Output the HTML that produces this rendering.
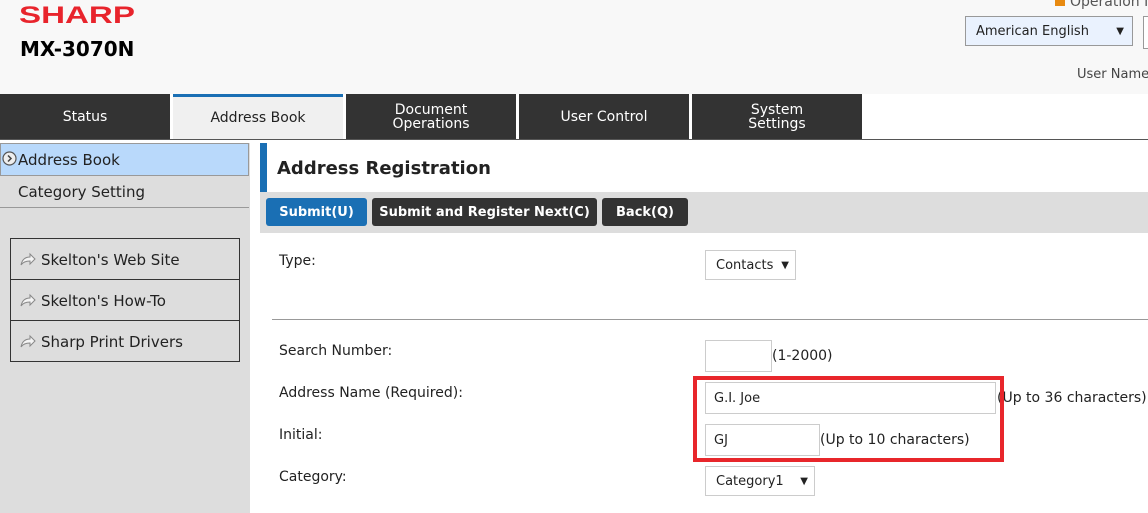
<!DOCTYPE html>
<html><head><meta charset="utf-8"><style>
*{margin:0;padding:0;box-sizing:border-box}
body{width:1148px;height:513px;overflow:hidden;background:#fff;font-family:"DejaVu Sans","Liberation Sans",sans-serif;font-size:14px;color:#222;position:relative}
.a{position:absolute;white-space:nowrap}
.tab{position:absolute;top:94px;height:45px;background:#333;color:#fff;text-align:center;font-size:14px;line-height:14px;display:flex;align-items:center;justify-content:center}
.btn{position:absolute;top:198px;height:28px;border-radius:3px;color:#fff;font-size:13px;font-weight:bold;line-height:30px;text-align:center}
.inp{position:absolute;border:1px solid #ccc;background:#fff;font-size:13px;padding-left:8px;display:flex;align-items:center}
.lnk{position:absolute;left:10px;width:230px;height:42px;border:1px solid #333;font-size:15px;line-height:42px;padding-left:30px}
.lnk svg{position:absolute;left:8px;top:12px}
</style></head><body>
<div class="a" style="left:0;top:0;width:1148px;height:94px;background:#f8f8f8"></div>
<div class="a" style="left:19px;top:3px;font-family:'Liberation Sans',sans-serif;font-weight:bold;font-size:24px;line-height:26px;color:#e8242c;transform:scaleX(1.38);transform-origin:left">SHARP</div>
<div class="a" style="left:20px;top:37px;font-weight:bold;font-size:20px;color:#000">MX-3070N</div>
<div class="a" style="left:1055px;top:-6px;font-size:14px;color:#555"><span style="display:inline-block;width:10px;height:11px;background:#e88a10;margin-right:5px"></span>Operation Manual</div>
<div class="a" style="left:965px;top:16px;width:168px;height:30px;background:#eaf2fe;border:1px solid #999;font-size:13px;line-height:30px;padding-left:10px">American English<span style="position:absolute;right:8px;font-size:10px">▼</span></div>
<div class="a" style="left:1143px;top:16px;width:20px;height:33px;border:1px solid #999;background:#fff"></div>
<div class="a" style="left:1077px;top:67px;font-size:13px;color:#444">User Name:</div>
<div class="tab" style="left:0;width:170px">Status</div>
<div class="tab" style="left:173px;width:170px;background:#f0f0f0;color:#222;border-top:3px solid #1a6fb4">Address Book</div>
<div class="tab" style="left:346px;width:170px">Document<br>Operations</div>
<div class="tab" style="left:519px;width:170px">User Control</div>
<div class="tab" style="left:692px;width:170px">System<br>Settings</div>
<div class="a" style="left:0;top:139px;width:1148px;height:1px;background:#555"></div>
<div class="a" style="left:0;top:143px;width:250px;height:370px;background:#ddd"></div>
<div class="a" style="left:0;top:143px;width:249px;height:33px;background:#b9d9fb;border:1px solid #999;font-size:15px;line-height:33px;padding-left:17px">Address Book</div>
<svg class="a" style="left:2px;top:151px" width="15" height="15"><circle cx="7.5" cy="7.5" r="6.5" fill="#eee" stroke="#555" stroke-width="1.2"/><path d="M6 4.5l3 3-3 3" fill="none" stroke="#444" stroke-width="1.5"/></svg>
<div class="a" style="left:0;top:176px;width:249px;height:32px;border-bottom:1px solid #999;font-size:15px;line-height:32px;padding-left:18px">Category Setting</div>
<div class="lnk" style="top:238px"><svg width="18" height="16"><path d="M2 14c1-5 4-8 9-8V3l5 5-5 5V10c-4 0-7 1-9 4z" fill="#f4f4f4" stroke="#888"/></svg>Skelton's Web Site</div>
<div class="lnk" style="top:279px"><svg width="18" height="16"><path d="M2 14c1-5 4-8 9-8V3l5 5-5 5V10c-4 0-7 1-9 4z" fill="#f4f4f4" stroke="#888"/></svg>Skelton's How-To</div>
<div class="lnk" style="top:320px"><svg width="18" height="16"><path d="M2 14c1-5 4-8 9-8V3l5 5-5 5V10c-4 0-7 1-9 4z" fill="#f4f4f4" stroke="#888"/></svg>Sharp Print Drivers</div>
<div class="a" style="left:260px;top:143px;width:7px;height:49px;background:#1a6fb4"></div>
<div class="a" style="left:277px;top:158px;font-weight:bold;font-size:18px;color:#222">Address Registration</div>
<div class="a" style="left:260px;top:192px;width:888px;height:41px;background:#ddd"></div>
<div class="btn" style="left:266px;width:101px;background:#1a6fb4">Submit(U)</div>
<div class="btn" style="left:372px;width:225px;background:#333">Submit and Register Next(C)</div>
<div class="btn" style="left:602px;width:86px;background:#333">Back(Q)</div>
<div class="a" style="left:279px;top:253px">Type:</div>
<div class="inp" style="left:705px;top:250px;width:91px;height:30px;padding-left:10px">Contacts<span style="position:absolute;right:6px;font-size:10px">▼</span></div>
<div class="a" style="left:272px;top:319px;width:876px;height:1px;background:#999"></div>
<div class="a" style="left:279px;top:343px">Search Number:</div>
<div class="inp" style="left:705px;top:340px;width:67px;height:32px"></div>
<div class="a" style="left:772px;top:348px">(1-2000)</div>
<div class="a" style="left:279px;top:385px">Address Name (Required):</div>
<div class="inp" style="left:705px;top:382px;width:291px;height:32px">G.I. Joe</div>
<div class="a" style="left:997px;top:390px">(Up to 36 characters)</div>
<div class="a" style="left:279px;top:427px">Initial:</div>
<div class="inp" style="left:705px;top:424px;width:115px;height:32px">GJ</div>
<div class="a" style="left:820px;top:432px">(Up to 10 characters)</div>
<div class="a" style="left:693px;top:376px;width:311px;height:86px;border:4px solid #e8262b"></div>
<div class="a" style="left:279px;top:469px">Category:</div>
<div class="inp" style="left:705px;top:466px;width:110px;height:30px;padding-left:10px">Category1<span style="position:absolute;right:6px;font-size:10px">▼</span></div>
</body></html>
